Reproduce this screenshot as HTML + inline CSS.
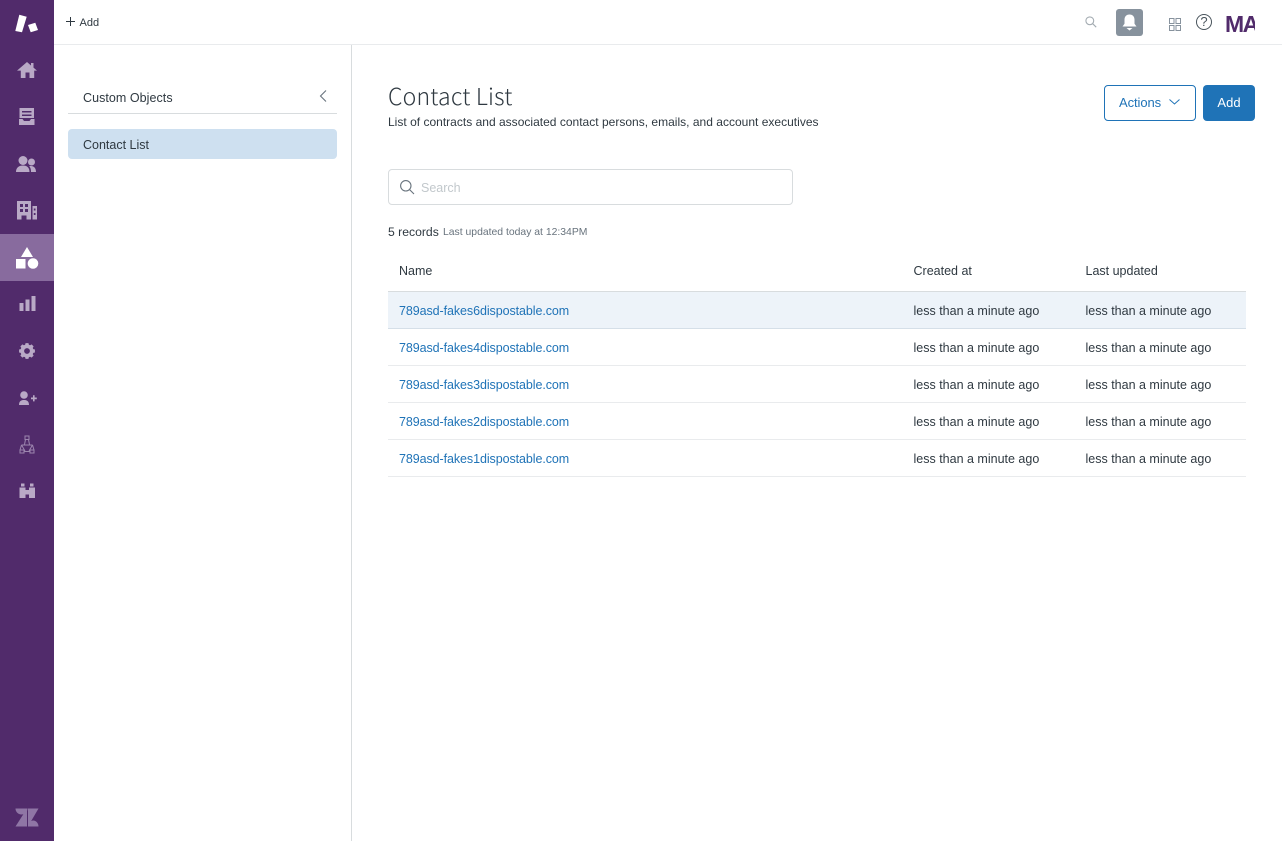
<!DOCTYPE html>
<html lang="en"><head><meta charset="utf-8"><title>Contact List</title>
<style>
html,body{margin:0;padding:0;background:#fff;width:1282px;height:841px;overflow:hidden}
body{position:relative;font-family:"Liberation Sans",sans-serif;color:#2f3941;font-size:12.500px}
.a{position:absolute;white-space:nowrap;line-height:18px}
svg{position:absolute;overflow:visible}
.b{position:absolute;background:#e9ebed}
.l{color:#1f73b7;letter-spacing:-.08px}
</style></head><body>
<div style="position:absolute;left:0;top:0;width:54px;height:841px;background:#512b6b"></div>
<div style="position:absolute;left:0;top:234px;width:54px;height:47px;background:#886b9e"></div>

<svg style="left:0;top:0" width="54" height="841" fill="#b9a9c6">
<path fill="#fff" d="M19.300 14.700l7.400 2-4.700 15.600-6.700-1.300z"/><path fill="#fff" d="M28 25l7.300-2.300 2.700 7.300-7.300 2.300z"/>
<path d="M27 62l4 3.500V63h2.500v4.600l3.500 3h-2.800V78h-4.700v-5.500h-4V78h-4.700v-7.400H17z"/>
<path fill-rule="evenodd" d="M19.500 108h14.500v10H19.500zM22 111v1.500h9.500V111zM22 114.500v1.500h9.500v-1.500zM19 119h3.500l1.500 2h5.500l1.500-2h3.500v6H19z"/>
<circle cx="23" cy="160.500" r="4.500"/><circle cx="31.500" cy="162" r="3.500"/><path d="M16 172c0-4.500 3-6.500 7-6.500s6.500 2 6.500 6.500zM31 172c0-2.500-.5-4.500-1.800-5.700 3.800-1 6.800 1.200 6.800 5.700z"/>
<path fill-rule="evenodd" d="M17 201h14v18.500h-4.500v-4h-5v4H17zM20 204v3h3v-3zM25 204v3h3v-3zM20 209v3h3v-3zM25 209v3h3v-3zM32.500 206H37v13.500h-4.500zM33.800 208.500v2h1.700v-2zM33.800 213v2h1.700v-2z"/>
<path fill="#fff" d="M27 247l6 10H21z"/><rect fill="#fff" x="16" y="259" width="9.500" height="9.500"/><circle fill="#fff" cx="33" cy="263.500" r="5.300"/>
<path d="M19.500 303h4v8h-4zM25.500 299.500h4V311h-4zM31.500 296h4v15h-4z"/>
<g transform="translate(27 351) scale(.72) translate(-27 -353.500)"><path d="M25 342.500h4l.6 2.300 1.700.7 2.100-1.200 2.800 2.800-1.200 2.100.7 1.700 2.300.6v4l-2.300.6-.7 1.700 1.200 2.100-2.800 2.800-2.100-1.200-1.700.7-.6 2.300h-4l-.6-2.300-1.700-.7-2.100 1.200-2.800-2.800 1.200-2.100-.7-1.700-2.300-.6v-4l2.300-.6.700-1.700-1.200-2.100 2.800-2.800 2.100 1.200 1.700-.7z"/></g>
<circle cx="27" cy="351" r="2.900" fill="#512b6b"/>
<circle cx="24" cy="395" r="3.800"/><path d="M19 405c0-3.800 2-5 5-5s5 1.200 5 5zM31 397.500h2v-2.200h1.600v2.200h2.200v1.700h-2.200v2.200H33v-2.200h-2z"/>
<g fill="none" stroke="#9c85ae" stroke-width="1"><path d="M25 436h4v3.500h-4zM25.500 439.500l-1 5M28.500 439.500l1 5M21.500 445h11M21.500 445l-1.500 5M32.500 445l1.500 5M20 450h4v3h-4zM30 450h4v3h-4zM24 451.500h6M21.500 445l3.500 6M32.500 445l-3.500 6"/></g>
<path d="M21 483.500h3.500v3H21zM30 483.500h3.500v3H30zM19.500 487.500h6v2.500h3.500v-2.500h6V498h-6v-3.500h-3.500V498h-6z"/>
<path fill="#8f76a5" d="M15.500 808.500h12c0 3.400-2.700 6-6 6s-6-2.600-6-6zM28 808.500h10.500L28 826.500zM15.500 826.500L27 808.500v18zM28 826.500c0-3.300 2.700-6 5.300-6s5.200 2.700 5.200 6z"/>
</svg>

<div class="b" style="left:54px;top:44px;width:1228px;height:1px"></div>
<div class="b" style="left:351px;top:45px;width:1px;height:796px;background:#d8dcde"></div>
<svg style="left:66px;top:17px" width="9" height="9" fill="none" stroke="#2f3941"><path d="M4.500 0v9M0 4.500h9"/></svg>
<div class="a" style="left:79.500px;top:14px;font-size:11px;color:#2f3941">Add</div>

<svg style="left:1085px;top:16px" width="12" height="12" fill="none" stroke="#a4acb2" stroke-width="1.100"><circle cx="4.800" cy="4.800" r="3.900"/><path d="M7.700 7.700l3.500 3.500"/></svg>
<div style="position:absolute;left:1116px;top:9px;width:27px;height:27px;border-radius:3px;background:#87929d"></div>
<svg style="left:1116px;top:9px" width="27" height="27" fill="#fff"><path d="M13.500 5.500c3.300 0 5 2.200 5 5.200v4l2 2.800h-14l2-2.800v-4c0-3 1.700-5.200 5-5.200zM10.500 19h6l-3 2.500z"/></svg>
<svg style="left:1169px;top:18px" width="12" height="14" fill="none" stroke="#87929d"><rect x=".5" y=".5" width="4.500" height="5"/><rect x="7" y=".5" width="4.500" height="5"/><rect x=".5" y="7.500" width="4.500" height="5"/><rect x="7" y="7.500" width="4.500" height="5"/></svg>
<svg style="left:1196px;top:14px" width="16" height="16" fill="none" stroke="#49545c" stroke-width="1"><circle cx="8" cy="8" r="7.500"/></svg>
<div class="a" style="left:1196px;top:13px;width:16px;text-align:center;font-size:13px;color:#49545c">?</div>
<div style="position:absolute;left:1226px;top:8px;width:29px;height:30px;overflow:hidden"><div class="a" style="left:-1px;top:4px;font:bold 23px/24px 'Liberation Sans',sans-serif;color:#512b6b;letter-spacing:-1.500px">MA</div></div>

<div class="a" style="left:83px;top:89px;letter-spacing:.05px">Custom Objects</div>
<svg style="left:319px;top:90px" width="8" height="12" fill="none" stroke="#68737d" stroke-width="1.100"><path d="M7 .5L1.500 6 7 11.500"/></svg>
<div class="b" style="left:68px;top:113px;width:269px;height:1px;background:#d8dcde"></div>
<div style="position:absolute;left:68px;top:129px;width:269px;height:30px;background:#cee0f0;border-radius:4px"></div>
<div class="a" style="left:83px;top:136px">Contact List</div>

<div class="a" style="left:388px;top:81px;font-family:'Noto Sans CJK JP','Liberation Sans',sans-serif;font-size:23px;line-height:28px;letter-spacing:.2px;color:#2f3941;font-weight:300">Contact List</div>
<div class="a" style="left:388px;top:113px;font-size:12px;letter-spacing:.012px">List of contracts and associated contact persons, emails, and account executives</div>

<div style="position:absolute;left:1104px;top:85px;width:90px;height:34px;border:1px solid #1f73b7;border-radius:4px"></div>
<div class="a l" style="left:1119px;top:94px;font-size:13px">Actions</div>
<svg style="left:1169px;top:99px" width="11" height="6" fill="none" stroke="#1f73b7"><path d="M.5.500L5.500 5l5-4.500"/></svg>
<div style="position:absolute;left:1203px;top:85px;width:52px;height:36px;background:#1f73b7;border-radius:4px"></div>
<div class="a" style="left:1203px;top:94px;width:52px;text-align:center;color:#fff;font-size:13px">Add</div>

<div style="position:absolute;left:388px;top:169px;width:403px;height:34px;border:1px solid #d8dcde;border-radius:4px"></div>
<svg style="left:400px;top:180px" width="14" height="14" fill="none" stroke="#68737d" stroke-width="1.100"><circle cx="5.800" cy="5.800" r="5.200"/><path d="M9.500 9.500l4.500 4.500"/></svg>
<div class="a" style="left:421px;top:179px;color:#c2c8cc">Search</div>

<div class="a" style="left:388px;top:223px;font-size:12.200px">5 records</div>
<div class="a" style="left:443px;top:224px;font-size:10.400px;color:#68737d">Last updated today at 12:34PM</div>

<div class="a" style="left:399px;top:262px">Name</div>
<div class="a" style="left:913.500px;top:262px">Created at</div>
<div class="a" style="left:1085.500px;top:262px">Last updated</div>

<div style="position:absolute;left:388px;top:291px;width:858px;height:37px;background:#edf3f9"></div>
<div class="b" style="left:388px;top:291px;width:858px;height:1px;background:#d8dcde"></div>
<div class="b" style="left:388px;top:328px;width:858px;height:1px;background:#d5dfe8"></div>
<div class="b" style="left:388px;top:365px;width:858px;height:1px"></div>
<div class="b" style="left:388px;top:402px;width:858px;height:1px"></div>
<div class="b" style="left:388px;top:439px;width:858px;height:1px"></div>
<div class="b" style="left:388px;top:476px;width:858px;height:1px"></div>

<div class="a l" style="left:399px;top:302px">789asd-fakes6dispostable.com</div>
<div class="a" style="left:913.500px;top:302px">less than a minute ago</div>
<div class="a" style="left:1085.500px;top:302px">less than a minute ago</div>
<div class="a l" style="left:399px;top:339px">789asd-fakes4dispostable.com</div>
<div class="a" style="left:913.500px;top:339px">less than a minute ago</div>
<div class="a" style="left:1085.500px;top:339px">less than a minute ago</div>
<div class="a l" style="left:399px;top:376px">789asd-fakes3dispostable.com</div>
<div class="a" style="left:913.500px;top:376px">less than a minute ago</div>
<div class="a" style="left:1085.500px;top:376px">less than a minute ago</div>
<div class="a l" style="left:399px;top:413px">789asd-fakes2dispostable.com</div>
<div class="a" style="left:913.500px;top:413px">less than a minute ago</div>
<div class="a" style="left:1085.500px;top:413px">less than a minute ago</div>
<div class="a l" style="left:399px;top:450px">789asd-fakes1dispostable.com</div>
<div class="a" style="left:913.500px;top:450px">less than a minute ago</div>
<div class="a" style="left:1085.500px;top:450px">less than a minute ago</div>
</body></html>
